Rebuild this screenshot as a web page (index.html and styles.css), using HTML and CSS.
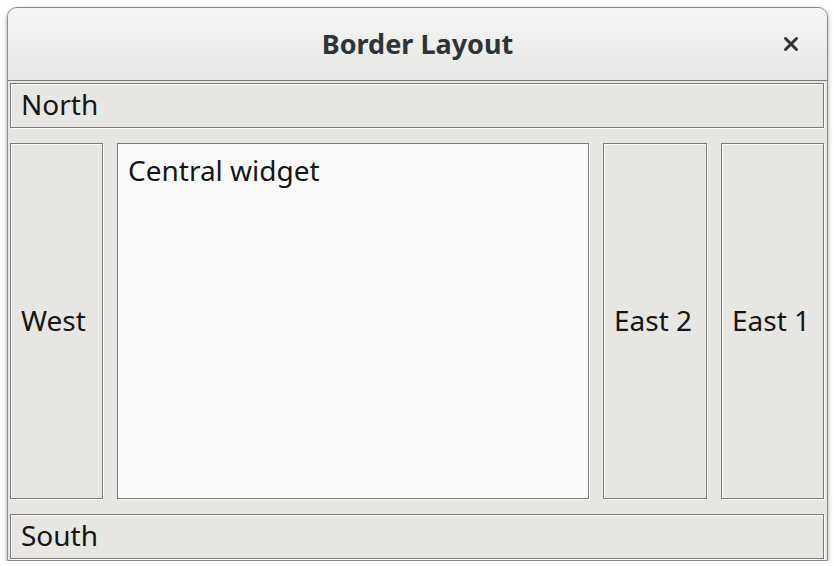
FILE: index.html
```html
<!DOCTYPE html>
<html lang="en">
<head>
    <meta charset="UTF-8">
    <title>Border Layout</title>
    <link rel="stylesheet" href="styles.css">
</head>
<body>
    <div class="window">
        <div class="titlebar">
            <span class="title">Border Layout</span>
            <button class="close" title="Close">
                <svg width="16" height="16" viewBox="0 0 16 16">
                    <path d="M2.5 2.5 L13.5 13.5 M13.5 2.5 L2.5 13.5" stroke="#2e3436" stroke-width="3" stroke-linecap="round"/>
                </svg>
            </button>
        </div>
        <div class="content">
            <div class="panel north">North</div>
            <div class="middle">
                <div class="panel">West</div>
                <div class="panel central">Central widget</div>
                <div class="panel">East 2</div>
                <div class="panel">East 1</div>
            </div>
            <div class="panel south">South</div>
        </div>
    </div>
</body>
</html>
```

FILE: styles.css
```css
body {
    margin: 0;
    padding: 7px 0 0 7px;
    background: #fff;
    font-family: "Noto Sans", "DejaVu Sans", sans-serif;
}
.window {
    width: 819px;
    height: 552px;
    border: 1px solid #8a8986;
    border-radius: 10px 10px 0 0;
    background: #e8e6e3;
    box-shadow: 0 2px 5px rgba(0, 0, 0, 0.35);
    display: flex;
    flex-direction: column;
    overflow: hidden;
}
.titlebar {
    height: 72px;
    flex: none;
    border-bottom: 1px solid #7e7d7a;
    background: linear-gradient(#f5f5f4, #e7e7e6);
    display: flex;
    align-items: center;
    justify-content: center;
    position: relative;
}
.title {
    font-size: 27px;
    font-weight: bold;
    color: #2e3436;
    padding-bottom: 2px;
}
.close {
    position: absolute;
    right: 28px;
    top: 28px;
    width: 16px;
    height: 16px;
    padding: 0;
    border: none;
    background: none;
    cursor: pointer;
}
.content {
    flex: 1;
    display: flex;
    flex-direction: column;
    gap: 15px;
    padding: 2px 3px 1px 2px;
}
.panel {
    box-sizing: border-box;
    border: 1px solid #7c7a77;
    box-shadow: 1px 1px 0 #fdfdfc, inset 1px 1px 0 #fbfbfa;
    background: #e8e6e3;
    color: #151515;
    font-size: 28px;
    white-space: nowrap;
    display: flex;
    align-items: center;
    padding: 0 10px 4px 10px;
}
.north, .south {
    height: 45px;
    flex: none;
    padding-left: 10px;
}
.middle {
    flex: 1;
    display: grid;
    grid-template-columns: 93px 1fr 104px 103px;
    gap: 14px;
}
.middle .panel {
    padding: 0 9px 2px 10px;
}
.middle .central {
    align-items: flex-start;
    padding-top: 7px;
    background: #fafafa;
}
```
